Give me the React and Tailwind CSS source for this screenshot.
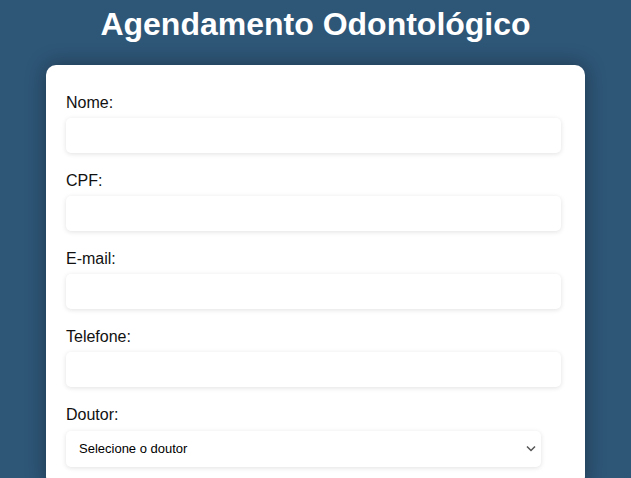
export default function App() {
  const fields = ["Nome:", "CPF:", "E-mail:", "Telefone:"];

  return (
    <div className="min-h-screen bg-[#2e5677] font-['Liberation_Sans',Arial,sans-serif] pt-[6px]">
      <h1 className="text-center text-[32px] font-bold text-white leading-[37px]">
        Agendamento Odontológico
      </h1>
      <div className="mx-auto mt-[22px] w-[539px] rounded-[10px] bg-white px-5 pt-[29px] pb-5 shadow-[0_0_20px_rgba(0,0,0,0.35)]">
        {fields.map((f) => (
          <div key={f} className="mb-[19px]">
            <label className="block text-[16px] leading-[18px] text-[#111]">{f}</label>
            <input
              type="text"
              className="mt-[6px] block h-[35px] w-[495px] rounded-[5px] bg-white px-2 shadow-[0_1px_5px_rgba(0,0,0,0.12)] outline-none"
            />
          </div>
        ))}
        <div>
          <label className="block text-[16px] leading-[18px] text-[#111]">Doutor:</label>
          <div className="relative mt-[7px] w-[475px]">
            <select className="block h-[36px] w-full appearance-none rounded-[5px] bg-white pl-[13px] text-[13px] text-black shadow-[0_1px_5px_rgba(0,0,0,0.12)] outline-none">
              <option>Selecione o doutor</option>
            </select>
            <svg
              className="pointer-events-none absolute right-[5px] top-[14px]"
              width="10"
              height="7"
              viewBox="0 0 10 7"
              fill="none"
              stroke="#555"
              strokeWidth="1.5"
            >
              <path d="M1 1.5l4 4 4-4" />
            </svg>
          </div>
        </div>
      </div>
    </div>
  );
}
